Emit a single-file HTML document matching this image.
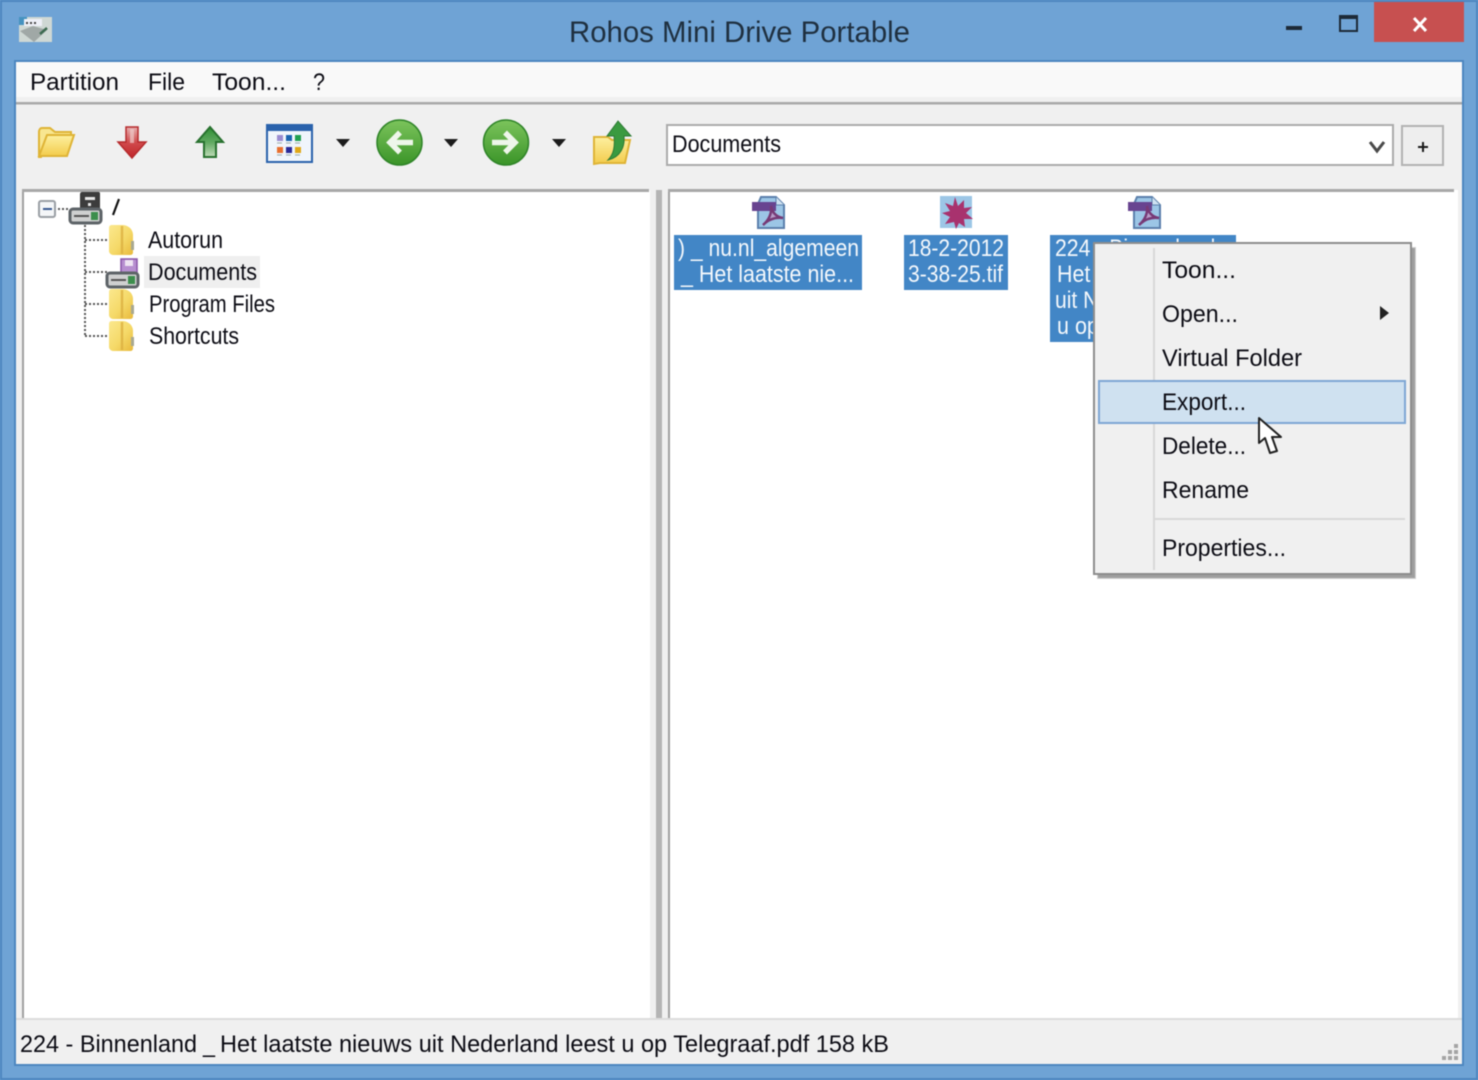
<!DOCTYPE html>
<html><head><meta charset="utf-8"><style>
html,body{margin:0;padding:0;background:#6fa3d5;width:1478px;height:1080px;overflow:hidden}
svg{display:block;filter:blur(.5px)}
text{font-family:"Liberation Sans",sans-serif;font-size:24px;fill:#0c0c14}
.w{fill:#f4f8fc}
</style></head><body>
<svg width="1478" height="1080" viewBox="0 0 1478 1080" xmlns="http://www.w3.org/2000/svg">
<defs>
<linearGradient id="fold" x1="0" y1="0" x2="0" y2="1"><stop offset="0" stop-color="#fdf0a0"/><stop offset="1" stop-color="#f3cc4c"/></linearGradient>
<linearGradient id="fold2" x1="0" y1="0" x2="1" y2="1"><stop offset="0" stop-color="#fbe88e"/><stop offset=".55" stop-color="#f5d968"/><stop offset="1" stop-color="#e8b93c"/></linearGradient>
<linearGradient id="red" x1="0" y1="0" x2="0" y2="1"><stop offset="0" stop-color="#e6b0b0"/><stop offset=".5" stop-color="#d04a4c"/><stop offset="1" stop-color="#c0262a"/></linearGradient>
<linearGradient id="grn" x1="0" y1="0" x2="0" y2="1"><stop offset="0" stop-color="#2f8f34"/><stop offset=".5" stop-color="#5fa860"/><stop offset="1" stop-color="#c0dcb8"/></linearGradient>
<linearGradient id="circ" x1="0" y1="0" x2="0" y2="1"><stop offset="0" stop-color="#7cc45c"/><stop offset="1" stop-color="#3a9428"/></linearGradient>
<g id="folder"><path d="M2 4c0-2 1-3 3-3h10c6 0 11 4 11 10v17c0 2-1 3-3 3H6c-2 0-4-2-4-4z" fill="url(#fold2)"/><path d="M15 2v28" stroke="#dcb040" stroke-width="2.500" opacity=".8"/><rect x="24" y="17" width="3" height="9" fill="#a8a890"/></g>
<g id="drive"><rect x="1" y="1" width="31" height="14" rx="3" fill="#cfd0d0" stroke="#5e6468" stroke-width="3"/><rect x="5" y="7" width="15" height="2" fill="#555"/><rect x="22" y="4" width="7" height="8" fill="#3c8e4c"/></g>
<g id="pdf"><path d="M9 1h15l8 8v23H6V8z" fill="#9cc6e6" stroke="#5b80ac" stroke-width="2"/><path d="M24 1v8h8" fill="#cfe2f2" stroke="#5b80ac"/><rect x="0" y="6" width="24" height="9" fill="#684490"/><path d="M11 29c6-5 9-12 8-19 1 6 5 11 12 12-8-1-15 2-20 7z" fill="#b89cc8" stroke="#773a76" stroke-width="2.500"/></g>
</defs>

<!-- window frame -->
<rect x="0" y="0" width="1478" height="1080" fill="#4e86bf"/>
<rect x="2" y="2" width="1474" height="1076" fill="#6fa3d5"/>
<rect x="14" y="60" width="1450" height="1006" fill="#4d87c0"/>

<!-- app icon -->
<rect x="19" y="17" width="33" height="25" fill="#cfd8d4"/>
<rect x="19" y="17" width="8" height="8" fill="#4592bf"/>
<rect x="24" y="19" width="18" height="7" fill="#eef0f8"/>
<path d="M26 23h12" stroke="#444" stroke-width="2" stroke-dasharray="2 2"/>
<path d="M20 31l13-5 14 4-13 12z" fill="#a0a8a6"/>
<path d="M40 34l7-6" stroke="#3c6a50" stroke-width="2.500"/>

<!-- title -->
<text x="569" y="42" textLength="341" lengthAdjust="spacingAndGlyphs" style="font-size:30px;fill:#1f3040">Rohos Mini Drive Portable</text>
<rect x="1286" y="26" width="16" height="4" fill="#1d2a38"/>
<rect x="1340" y="16" width="17" height="15" fill="none" stroke="#1d2a38" stroke-width="2"/>
<rect x="1339" y="15" width="19" height="4" fill="#1d2a38"/>
<rect x="1374" y="2" width="90" height="40" fill="#c75050"/>
<path d="M1414 18l12 13M1426 18l-12 13" stroke="#fff" stroke-width="3"/>

<!-- client -->
<rect x="16" y="62" width="1446" height="1002" fill="#f0f0f0"/>
<rect x="16" y="62" width="1446" height="35" fill="#f9f9f9"/>
<rect x="16" y="97" width="1446" height="5" fill="#f0f0f0"/>
<rect x="16" y="102" width="1446" height="2.500" fill="#a9a9a9"/>

<!-- menu -->
<text x="30" y="90" textLength="89" lengthAdjust="spacingAndGlyphs">Partition</text>
<text x="148" y="90" textLength="37" lengthAdjust="spacingAndGlyphs">File</text>
<text x="212" y="90" textLength="74" lengthAdjust="spacingAndGlyphs">Toon...</text>
<text x="313" y="90" textLength="12" lengthAdjust="spacingAndGlyphs">?</text>

<!-- toolbar icons -->
<path d="M39 132c0-2 1-4 3-4h8l5 4h16v5H47l-6 20h-2z" fill="#f8e690" stroke="#dfb436" stroke-width="2"/>
<path d="M47 135h27l-7 21H39z" fill="url(#fold)" stroke="#dfb436" stroke-width="2"/>

<path d="M126 127h12v15h8l-14 16-14-16h8z" fill="url(#red)" stroke="#b62a2c" stroke-width="1.500"/>
<path d="M130 129h4v14h-4z" fill="#eecaca" opacity=".7"/>

<path d="M210 127l13 15h-7v15h-12v-15h-7z" fill="url(#grn)" stroke="#27702e" stroke-width="2"/>

<rect x="267" y="125" width="45" height="37" fill="#f0f5fb" stroke="#2a62ac" stroke-width="2"/>
<rect x="266" y="125" width="47" height="6" fill="#2a62ac"/>
<rect x="277" y="135" width="6" height="6" fill="#9a8cd0"/><rect x="286" y="135" width="6" height="6" fill="#1a64b0"/><rect x="295" y="135" width="6" height="6" fill="#20a050"/>
<rect x="277" y="147" width="6" height="6" fill="#e87030"/><rect x="286" y="147" width="6" height="6" fill="#2a2a98"/><rect x="295" y="147" width="6" height="6" fill="#e0a818"/>
<path d="M277 143h24M277 155h24" stroke="#9aa" stroke-width="1" stroke-dasharray="5 4"/>

<path d="M336 139h14l-7 8z" fill="#1c1c1c"/>
<path d="M444 139h14l-7 8z" fill="#1c1c1c"/>
<path d="M552 139h14l-7 8z" fill="#1c1c1c"/>

<ellipse cx="399.500" cy="142.500" rx="22.500" ry="22.500" fill="url(#circ)" stroke="#2f8428" stroke-width="1.500"/>
<path d="M413 142.500h-21M400 132.500l-10 10 10 10" fill="none" stroke="#eef6ea" stroke-width="5.500"/>
<ellipse cx="506" cy="142.500" rx="22.500" ry="22.500" fill="url(#circ)" stroke="#2f8428" stroke-width="1.500"/>
<path d="M492 142.500h21M505 132.500l10 10-10 10" fill="none" stroke="#eef6ea" stroke-width="5.500"/>

<path d="M594 137h14l4 3h18l-5 23h-25l-6 1z" fill="url(#fold)" stroke="#dfb436" stroke-width="2"/>
<path d="M608 160c6-6 7-14 6-24h-7l11-15 13 15h-7c1 10-3 21-16 24z" fill="#3a9a40" stroke="#2d7a34" stroke-width="1"/>

<!-- combo -->
<rect x="667" y="125" width="726" height="40" fill="#fff" stroke="#ababab" stroke-width="2"/>
<text x="672" y="152" textLength="109" lengthAdjust="spacingAndGlyphs">Documents</text>
<path d="M1370 142l7 9 7-9" fill="none" stroke="#4a4a4a" stroke-width="3"/>
<rect x="1402" y="126" width="41" height="39" fill="#eeeeee" stroke="#b2b2b2" stroke-width="2"/>
<path d="M1418 147h10M1423 142v10" stroke="#1a1a1a" stroke-width="2"/>

<!-- tree pane -->
<rect x="22" y="190" width="628" height="829" fill="#fff"/>
<rect x="22" y="190" width="2" height="829" fill="#a0a0a0"/>
<rect x="22" y="189" width="627" height="3" fill="#a8a8a8"/>
<rect x="656" y="190" width="6" height="829" fill="#b4b4b4"/>
<!-- list pane -->
<rect x="668" y="190" width="790" height="829" fill="#fff"/>
<rect x="668" y="190" width="2" height="829" fill="#a0a0a0"/>
<rect x="668" y="189" width="786" height="3" fill="#a8a8a8"/>

<!-- tree -->
<rect x="39" y="201" width="16" height="16" rx="2" fill="#f4f6f8" stroke="#9a9fa4" stroke-width="2"/>
<path d="M43 209h9" stroke="#3a5a90" stroke-width="2"/>
<path d="M58 209h10M85 225v112M85 240h22M85 272h22M85 304h22M85 336h22" stroke="#555" stroke-width="2" stroke-dasharray="2 2" fill="none"/>
<path d="M80 194c0-1 1-2 2-2h16c2 0 2 1 2 2v16H80z" fill="#3c3c3c"/>
<rect x="85" y="197" width="10" height="3" fill="#e8e8e8"/><rect x="88" y="203" width="3" height="3" fill="#e8e8e8"/>
<use href="#drive" x="69" y="208"/>
<path d="M119 199l-6 16" stroke="#111" stroke-width="2.200"/>

<use href="#folder" x="107" y="224"/>
<text x="148" y="248" textLength="75" lengthAdjust="spacingAndGlyphs">Autorun</text>

<rect x="144" y="256" width="116" height="32" fill="#efefef"/>
<rect x="121" y="259" width="16" height="16" fill="#b78fd0" stroke="#8a55a8" stroke-width="1.500"/>
<rect x="125" y="260" width="8" height="6" fill="#eee4f2"/>
<use href="#drive" x="106" y="272"/>
<text x="148" y="280" textLength="109" lengthAdjust="spacingAndGlyphs">Documents</text>

<use href="#folder" x="107" y="288"/>
<text x="149" y="312" textLength="126" lengthAdjust="spacingAndGlyphs">Program Files</text>
<use href="#folder" x="107" y="320"/>
<text x="149" y="344" textLength="90" lengthAdjust="spacingAndGlyphs">Shortcuts</text>

<!-- list -->
<use href="#pdf" x="752" y="196"/>
<rect x="674" y="235" width="188" height="55" fill="#4286c6"/>
<text class="w" x="678" y="256" textLength="181" lengthAdjust="spacingAndGlyphs">) _ nu.nl_algemeen</text>
<text class="w" x="681" y="282" textLength="173" lengthAdjust="spacingAndGlyphs">_ Het laatste nie...</text>

<rect x="940" y="196" width="32" height="32" fill="#9cc6e6"/>
<path d="M955 197l3 9 6-6 0 8 8-1-6 6 7 6-9 0 1 8-6-4-3 6-2-7-9 2 5-7-8-4 8-2-5-8 8 3z" fill="#a8326e"/>
<rect x="904" y="235" width="104" height="55" fill="#4286c6"/>
<text class="w" x="908" y="256" textLength="96" lengthAdjust="spacingAndGlyphs">18-2-2012</text>
<text class="w" x="908" y="282" textLength="95" lengthAdjust="spacingAndGlyphs">3-38-25.tif</text>

<use href="#pdf" x="1128" y="196"/>
<rect x="1050" y="235" width="186" height="107" fill="#4286c6"/>
<text class="w" x="1055" y="256" textLength="178" lengthAdjust="spacingAndGlyphs">224 - Binnenland _</text>
<text class="w" x="1057" y="282" textLength="175" lengthAdjust="spacingAndGlyphs">Het laatste nieuws</text>
<text class="w" x="1055" y="308" textLength="176" lengthAdjust="spacingAndGlyphs">uit Nederland leest</text>
<text class="w" x="1057" y="334" textLength="172" lengthAdjust="spacingAndGlyphs">u op Telegraaf.pdf</text>

<!-- status bar -->
<rect x="16" y="1018" width="1446" height="2" fill="#dcdcdc"/>
<text x="20" y="1052" textLength="177" lengthAdjust="spacingAndGlyphs">224 - Binnenland</text>
<text x="203" y="1052" textLength="12" lengthAdjust="spacingAndGlyphs">_</text>
<text x="220" y="1052" textLength="669" lengthAdjust="spacingAndGlyphs">Het laatste nieuws uit Nederland leest u op Telegraaf.pdf 158 kB</text>
<g fill="#a4a4a4"><rect x="1454" y="1044" width="4" height="4"/><rect x="1448" y="1050" width="4" height="4"/><rect x="1454" y="1050" width="4" height="4"/><rect x="1442" y="1056" width="4" height="4"/><rect x="1448" y="1056" width="4" height="4"/><rect x="1454" y="1056" width="4" height="4"/></g>

<!-- context menu -->
<rect x="1097" y="247" width="319" height="332" fill="#666" opacity=".3"/>
<rect x="1098" y="248" width="317" height="330" fill="#555" opacity=".4"/>
<rect x="1094" y="243" width="317" height="331" fill="#f0f0f0" stroke="#8d8d8d" stroke-width="2"/>
<rect x="1153" y="248" width="2" height="322" fill="#d8d8d8"/>
<rect x="1153" y="518" width="252" height="2" fill="#d8d8d8"/>
<rect x="1099" y="381" width="306" height="42" fill="#cfe1f0" stroke="#7ea6d4" stroke-width="2"/>
<text x="1162" y="278" textLength="74" lengthAdjust="spacingAndGlyphs">Toon...</text>
<text x="1162" y="322" textLength="76" lengthAdjust="spacingAndGlyphs">Open...</text>
<path d="M1380 306l9 7-9 7z" fill="#222"/>
<text x="1162" y="366" textLength="140" lengthAdjust="spacingAndGlyphs">Virtual Folder</text>
<text x="1162" y="410" textLength="84" lengthAdjust="spacingAndGlyphs">Export...</text>
<text x="1162" y="454" textLength="84" lengthAdjust="spacingAndGlyphs">Delete...</text>
<text x="1162" y="498" textLength="87" lengthAdjust="spacingAndGlyphs">Rename</text>
<text x="1162" y="556" textLength="124" lengthAdjust="spacingAndGlyphs">Properties...</text>

<!-- cursor -->
<path d="M1259 418v25l6-5 5 15 7-2-5-14h9z" fill="#fff" stroke="#222" stroke-width="2" stroke-linejoin="round"/>
</svg>
</body></html>
